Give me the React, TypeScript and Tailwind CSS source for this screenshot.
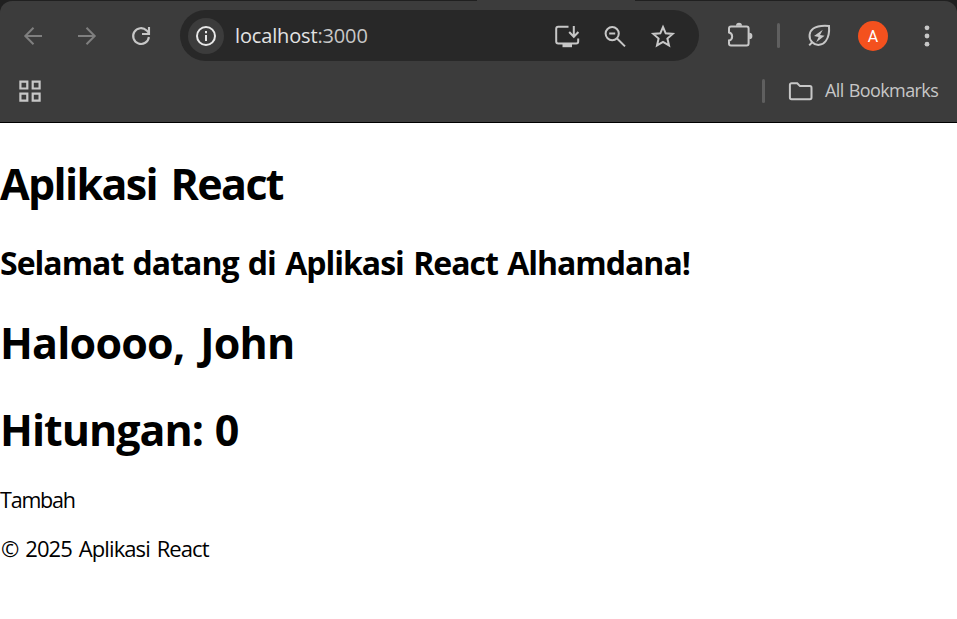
import React from 'react';

function Toolbar() {
  return (
    <div className="flex h-[69px] items-start">
      <svg className="mt-[21px] ml-[18px] shrink-0" width="28" height="28" fill="none" stroke="#7f7f7f" strokeWidth="2">
        <path d="M24 14H7.5M15.5 5.8 7.3 14l8.2 8.2" />
      </svg>
      <svg className="mt-[21px] ml-[28px] shrink-0" width="28" height="28" fill="none" stroke="#7f7f7f" strokeWidth="2">
        <path d="M4 14h16.5M12.5 5.8l8.2 8.2-8.2 8.2" />
      </svg>
      <svg className="mt-[21px] ml-[25px] shrink-0" width="28" height="28" fill="none" stroke="#c7c7c7" strokeWidth="2.1">
        <path d="M21.9 15A7.9 7.9 0 1 1 19.6 8.4L22 11" />
        <path d="M22 5v7h-7" />
      </svg>
      <div className="mt-[9px] ml-[25px] flex h-[51px] w-[519px] shrink-0 items-center rounded-full bg-[#282828]">
        <div className="ml-[8px] flex size-9 items-center justify-center rounded-full bg-[#3c3c3c]">
          <svg width="24" height="24" fill="none" stroke="#e8e8e8" strokeWidth="2">
            <circle cx="12" cy="12" r="9" />
            <path d="M12 11v6M12 7v2.2" />
          </svg>
        </div>
        <span className="ml-[11px] w-[135px] text-[20px] leading-[28px] tracking-[-0.15px] whitespace-nowrap text-[#e3e3e3]">
          localhost<span className="text-[#c7c7c7]">:3000</span>
        </span>
        <svg className="ml-[182px]" width="30" height="30" fill="none" stroke="#c7c7c7" strokeWidth="2">
          <path d="M16.5 5.8H6.2A2 2 0 0 0 4.2 7.8V20.4A2 2 0 0 0 6.2 22.4H24.2A2 2 0 0 0 26.2 20.4V17.5M21.8 5v10M17.2 11l4.6 4.8 4.6-4.8" />
          <path d="M10.5 22.5h9.5v3.7h-9.5z" fill="#c7c7c7" stroke="none" />
        </svg>
        <svg className="ml-[19px]" width="28" height="28" fill="none" stroke="#c7c7c7" strokeWidth="2">
          <circle cx="11.2" cy="11.6" r="6.6" />
          <path d="M8.2 11.6h6M15.8 16.2l8.2 8.2" />
        </svg>
        <svg className="ml-[20px]" width="28" height="28" fill="none" stroke="#c7c7c7" strokeWidth="2">
          <path d="M14 5l2.7 6.3 7 .6-5.3 4.6 1.6 6.9-6-3.6-6 3.6 1.6-6.9-5.3-4.6 7-.6z" />
        </svg>
      </div>
      <svg className="mt-[20px] ml-[25px] shrink-0" width="32" height="32" fill="none" stroke="#c7c7c7" strokeWidth="2">
        <path d="M7 5.5H22.6A2 2 0 0 1 24.6 7.5V22.6A2 2 0 0 1 22.6 24.6H7A2 2 0 0 1 5 22.6V19.4C9.2 18.6 9.2 12.2 5 11.4V7.5A2 2 0 0 1 7 5.5z" />
        <path d="M12 4.7a3 3 0 0 1 6 0zM25.2 11.8a3.2 3.2 0 0 1 0 6.4z" fill="#c7c7c7" stroke="none" />
      </svg>
      <div className="mt-[22px] ml-[21px] h-[25px] w-[3px] shrink-0 rounded-full bg-[#5f5f5f]" />
      <svg className="mt-[19px] ml-[24px] shrink-0" width="30" height="30" fill="none" stroke="#c7c7c7" strokeWidth="2">
        <path d="M5.2 25.4l3-3.2C4 18 5.1 11.5 9.3 8.5 13.3 5.7 19 5.4 25 5.9 25.5 12 24.5 17.5 21.8 21 18.5 25.5 12.3 26.4 8.2 22.2" />
        <path d="M18.8 9.7l-8.8 6.4 4.6.9-2.4 5.2 8.4-6.4-4.6-.9z" fill="#c7c7c7" stroke="none" />
      </svg>
      <div className="mt-[20px] ml-[24px] flex size-[30px] shrink-0 items-center justify-center rounded-full bg-[#f4511e] pt-px font-[Roboto,sans-serif] text-[16px] text-white">
        A
      </div>
      <svg className="mt-[21px] ml-[33px] shrink-0" width="12" height="28" fill="#c7c7c7">
        <circle cx="6" cy="5.8" r="2.4" />
        <circle cx="6" cy="14" r="2.4" />
        <circle cx="6" cy="22.2" r="2.4" />
      </svg>
    </div>
  );
}

function BookmarksBar() {
  return (
    <div className="flex h-[41px] items-center">
      <svg className="ml-[18px]" width="24" height="24" fill="none" stroke="#c7c7c7" strokeWidth="2.2">
        <path d="M2.4 2.6h6.9v6.9H2.4zM14.7 2.6h6.9v6.9h-6.9zM2.4 14.7h6.9v6.9H2.4zM14.7 14.7h6.9v6.9h-6.9z" />
      </svg>
      <div className="ml-auto h-6 w-[3px] rounded-full bg-[#5f5f5f]" />
      <svg className="ml-[22px]" width="28" height="24" fill="none" stroke="#c7c7c7" strokeWidth="2">
        <path d="M4.5 4.2h5.7l2.8 2.9h9.9a1.6 1.6 0 0 1 1.6 1.6v9.9a1.6 1.6 0 0 1-1.6 1.6H4.5a1.6 1.6 0 0 1-1.6-1.6V5.8a1.6 1.6 0 0 1 1.6-1.6z" />
      </svg>
      <span className="mr-[18px] mb-[2px] ml-[10px] w-[114px] text-[18px] leading-[26px] tracking-[-0.6px] whitespace-nowrap text-[#c7c7c7] [word-spacing:1px]">
        All Bookmarks
      </span>
    </div>
  );
}

export default function App() {
  return (
    <div className="h-[619px] w-[957px] overflow-hidden bg-white font-['Open_Sans','Noto_Sans',sans-serif]">
      <header className="h-[123px] border-b border-black bg-[#202020]">
        <div className="ml-[477px] h-px w-[158px] bg-[#3c3c3c]" />
        <div className="h-[121px] rounded-t-[12px] bg-[#3c3c3c]">
          <Toolbar />
          <BookmarksBar />
        </div>
      </header>
      <main className="flex flex-col items-start pt-[31px] whitespace-nowrap text-black">
        <h1 className="text-[43px] leading-[60px] font-bold tracking-[-1.65px] [word-spacing:4px]">Aplikasi React</h1>
        <h2 className="mt-[27px] text-[32px] leading-[44px] font-bold tracking-[-1px] [word-spacing:2px]">
          Selamat datang di Aplikasi React Alhamdana!
        </h2>
        <h1 className="mt-[28px] text-[43px] leading-[60px] font-bold tracking-[-0.8px] [word-spacing:5.5px]">
          Haloooo, John
        </h1>
        <h1 className="mt-[27px] text-[43px] leading-[60px] font-bold tracking-[-1px] [word-spacing:1.5px]">
          Hitungan: 0
        </h1>
        <button className="mt-[25px] text-[21.5px] leading-[30px] tracking-[-1.2px]">Tambah</button>
        <footer className="mt-[18px] pl-px text-[22px] leading-[30px] tracking-[-0.9px] [word-spacing:2px]">
          © 2025 Aplikasi React
        </footer>
      </main>
    </div>
  );
}
